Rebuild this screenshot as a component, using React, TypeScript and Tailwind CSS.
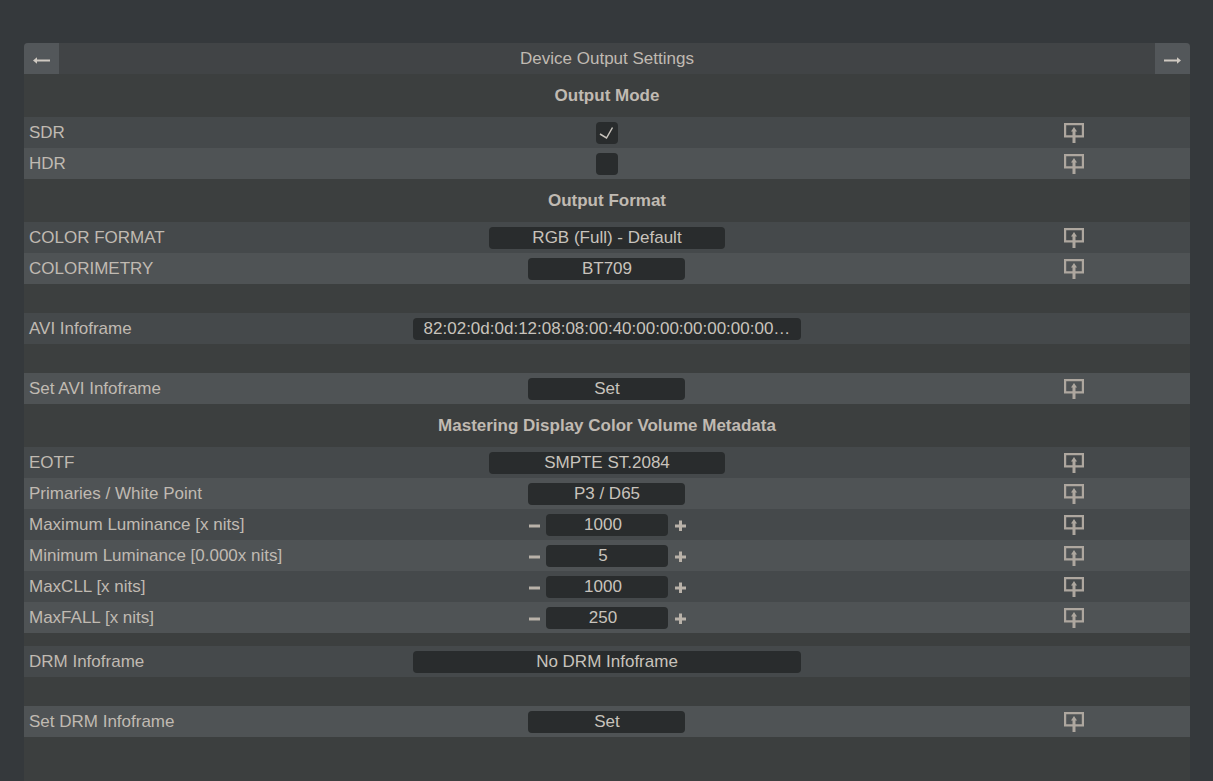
import { useId, useState } from "react";

const field =
  "h-[22px] rounded bg-[#292c2d] p-0 text-center text-[#c8c3bc] outline-none appearance-none";

const widths = {
  sm: "w-[157px]",
  md: "w-[236px]",
  full: "w-full",
};

type Width = keyof typeof widths;

function RouteIcon() {
  return (
    <svg width="22" height="22" viewBox="0 0 22 22" fill="none" stroke="#aea79f">
      <path d="M3.1 2.1H20.9V14.4H3.1Z" strokeWidth="2.2" />
      <path d="M12 21V8" strokeWidth="3" />
      <path d="M12 5L15 9.5H9Z" fill="#aea79f" stroke="none" />
    </svg>
  );
}

interface RowProps {
  label: string;
  htmlFor?: string;
  light?: boolean;
  action?: boolean;
  children: React.ReactNode;
}

function Row({ label, htmlFor, light, action = true, children }: RowProps) {
  return (
    <div className={`grid h-[31px] grid-cols-3 items-center ${light ? "bg-[#4f5355]" : "bg-[#45494b]"}`}>
      <label htmlFor={htmlFor} className="whitespace-nowrap pl-[5px]">
        {label}
      </label>
      <div className="flex items-center justify-center">{children}</div>
      <div className="flex justify-center pl-[40%]">
        {action && (
          <button type="button" aria-label={`Send ${label}`}>
            <RouteIcon />
          </button>
        )}
      </div>
    </div>
  );
}

function Section({ title }: { title: string }) {
  return <h2 className="flex h-[43px] items-center justify-center font-bold">{title}</h2>;
}

function CheckRow({ label, light, initial = false }: { label: string; light?: boolean; initial?: boolean }) {
  const id = useId();
  const [checked, setChecked] = useState(initial);
  return (
    <Row label={label} htmlFor={id} light={light}>
      <span className="grid place-items-center">
        <input
          id={id}
          type="checkbox"
          checked={checked}
          onChange={(e) => setChecked(e.target.checked)}
          className="col-start-1 row-start-1 size-[22px] appearance-none rounded bg-[#292c2d]"
        />
        {checked && (
          <svg
            className="pointer-events-none col-start-1 row-start-1"
            width="22"
            height="22"
            viewBox="0 0 22 22"
            fill="none"
            stroke="#c8c3bc"
            strokeWidth="1.5"
          >
            <path d="M4 12L10.5 16L16.5 5.5" />
          </svg>
        )}
      </span>
    </Row>
  );
}

interface SelectRowProps {
  label: string;
  options: string[];
  width: Width;
  light?: boolean;
}

function SelectRow({ label, options, width, light }: SelectRowProps) {
  const id = useId();
  return (
    <Row label={label} htmlFor={id} light={light}>
      <select id={id} className={`${field} ${widths[width]}`} defaultValue={options[0]}>
        {options.map((o) => (
          <option key={o} value={o}>
            {o}
          </option>
        ))}
      </select>
    </Row>
  );
}

function InfoRow({ label, value }: { label: string; value: string }) {
  const id = useId();
  return (
    <Row label={label} htmlFor={id} action={false}>
      <input id={id} readOnly value={value} className={`${field} ${widths.full}`} />
    </Row>
  );
}

function SetRow({ label }: { label: string }) {
  const id = useId();
  return (
    <Row label={label} htmlFor={id} light>
      <button id={id} type="button" className={`${field} ${widths.sm} leading-[22px]`}>
        Set
      </button>
    </Row>
  );
}

function NumberRow({ label, initial, light }: { label: string; initial: number; light?: boolean }) {
  const id = useId();
  const [value, setValue] = useState(initial);
  return (
    <Row label={label} htmlFor={id} light={light}>
      <div className="flex items-center justify-center gap-[6px]">
        <button type="button" aria-label="Decrease" onClick={() => setValue(value - 1)}>
          <svg width="12" height="12" viewBox="0 0 12 12" stroke="#b9b2a9" strokeWidth="3">
            <path d="M1 7H12" />
          </svg>
        </button>
        <input
          id={id}
          inputMode="numeric"
          value={value}
          onChange={(e) => setValue(Number(e.target.value) || 0)}
          className={`${field} w-[122px] pr-2`}
        />
        <button type="button" aria-label="Increase" onClick={() => setValue(value + 1)}>
          <svg width="12" height="12" viewBox="0 0 12 12" stroke="#b9b2a9" strokeWidth="3">
            <path d="M1 7H12M6.5 1.5V12" />
          </svg>
        </button>
      </div>
    </Row>
  );
}

function NavButton({ label, flip }: { label: string; flip?: boolean }) {
  return (
    <button type="button" aria-label={label} className="flex h-full w-[35px] items-center justify-center bg-[#53575a]">
      <svg className={flip ? "-scale-x-100" : ""} width="17" height="11" viewBox="0 0 17 11">
        <path d="M2 7.5H17" stroke="#cfc9c1" strokeWidth="2" />
        <path d="M0 7.5L4 4.2V10.8Z" fill="#cfc9c1" />
      </svg>
    </button>
  );
}

export default function App() {
  return (
    <div className="flex min-h-screen flex-col bg-[#35393c] pl-6 pr-[23px] pt-[43px] font-['Liberation_Sans',Arial,sans-serif] text-[17px] leading-5 text-[#c0bab2]">
      <main className="grow overflow-hidden rounded-t bg-[#3c3f3f]">
        <header className="flex h-[31px] items-center justify-between bg-[#414446]">
          <NavButton label="Previous page" />
          <h1>Device Output Settings</h1>
          <NavButton label="Next page" flip />
        </header>

        <Section title="Output Mode" />
        <CheckRow label="SDR" initial />
        <CheckRow label="HDR" light />

        <Section title="Output Format" />
        <SelectRow label="COLOR FORMAT" width="md" options={["RGB (Full) - Default"]} />
        <SelectRow label="COLORIMETRY" width="sm" options={["BT709"]} light />
        <div className="h-[29px]" />
        <InfoRow label="AVI Infoframe" value="82:02:0d:0d:12:08:08:00:40:00:00:00:00:00:00…" />
        <div className="h-[29px]" />
        <SetRow label="Set AVI Infoframe" />

        <Section title="Mastering Display Color Volume Metadata" />
        <SelectRow label="EOTF" width="md" options={["SMPTE ST.2084"]} />
        <SelectRow label="Primaries / White Point" width="sm" options={["P3 / D65"]} light />
        <NumberRow label="Maximum Luminance [x nits]" initial={1000} />
        <NumberRow label="Minimum Luminance [0.000x nits]" initial={5} light />
        <NumberRow label="MaxCLL [x nits]" initial={1000} />
        <NumberRow label="MaxFALL [x nits]" initial={250} light />
        <div className="h-[13px]" />
        <InfoRow label="DRM Infoframe" value="No DRM Infoframe" />
        <div className="h-[29px]" />
        <SetRow label="Set DRM Infoframe" />
      </main>
    </div>
  );
}
